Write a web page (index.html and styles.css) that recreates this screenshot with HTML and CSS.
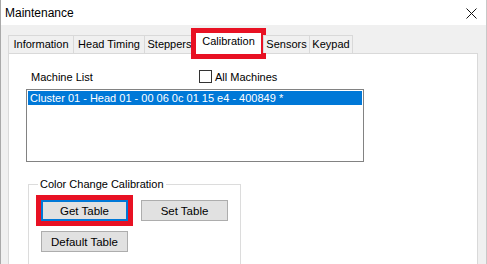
FILE: index.html
```html
<!DOCTYPE html>
<html lang="en">
<head>
    <meta charset="UTF-8">
    <title>Maintenance</title>
    <link rel="stylesheet" href="styles.css">
</head>
<body>

    <div class="window">
        <div class="titlebar">
            <span class="title">Maintenance</span>
            <svg class="close" width="11" height="11" viewBox="0 0 11 11">
                <path d="M0.5 0.5 L10.5 10.5 M10.5 0.5 L0.5 10.5" stroke="#111" stroke-width="1" fill="none"/>
            </svg>
        </div>

        <div class="dialog-body">
            <div class="tabs">
                <div class="tab tab-info">Information</div>
                <div class="tab tab-timing">Head Timing</div>
                <div class="tab tab-steppers">Steppers</div>
                <div class="tab tab-calib active">Calibration</div>
                <div class="tab tab-sensors">Sensors</div>
                <div class="tab tab-keypad">Keypad</div>
            </div>

            <div class="tab-page">
                <div class="list-header">
                    <span class="list-label">Machine List</span>
                    <label class="check">
                        <span class="check-box"></span>
                        All Machines
                    </label>
                </div>

                <div class="listbox">
                    <div class="list-item selected">Cluster 01 - Head 01 - 00 06 0c 01 15 e4 - 400849 *</div>
                </div>

                <fieldset class="group">
                    <legend>Color Change Calibration</legend>
                    <div class="btn-row">
                        <button class="btn focused">Get Table</button>
                        <button class="btn">Set Table</button>
                    </div>
                    <div class="btn-row">
                        <button class="btn">Default Table</button>
                    </div>
                </fieldset>
            </div>
        </div>
    </div>

</body>
</html>
```

FILE: styles.css
```css
body {
    margin: 0;
    font-family: "Liberation Sans", Arial, sans-serif;
    font-size: 11px;
    color: #000;
    background: #f0f0f0;
}
.window {
    width: 487px;
    height: 264px;
    box-sizing: border-box;
    border-left: 1px solid #a9a9a9;
    border-right: 1px solid #c8c8c8;
    background: #f0f0f0;
    overflow: hidden;
}
.titlebar {
    height: 25px;
    background: #fff;
    display: flex;
    align-items: center;
    justify-content: space-between;
    padding: 0 9px 0 4px;
}
.title {
    font-size: 12px;
    margin-top: 1px;
}
.close {
    margin-top: 1px;
}
.dialog-body {
    padding: 8px 8px 0 7px;
}
.tabs {
    display: flex;
    align-items: flex-end;
    height: 20px;
    position: relative;
    z-index: 1;
}
.tab {
    height: 18px;
    box-sizing: border-box;
    border: 1px solid #d9d9d9;
    border-bottom: none;
    border-right: none;
    background: #f0f0f0;
    line-height: 17px;
    text-align: center;
}
.tab-info { width: 65px; }
.tab-timing { width: 71px; }
.tab-steppers { width: 51px; border-right: 1px solid #d9d9d9; }
.tab-sensors { width: 46px; }
.tab-keypad { width: 44px; border-right: 1px solid #d9d9d9; }
.tab.active {
    width: 65px;
    height: 21px;
    margin: 0 2px 0 1px;
    background: #fff;
    border: none;
    line-height: 17px;
    outline: 5px solid #e81123;
    margin-bottom: -1px;
}
.tab-page {
    height: 220px;
    width: 470px;
    box-sizing: border-box;
    background: #fff;
    border: 1px solid #d9d9d9;
    padding: 0 0 0 17px;
}
.list-header {
    display: flex;
    align-items: center;
    height: 17px;
    margin-top: 14px;
}
.list-label {
    width: 168px;
    padding-left: 5px;
}
.check {
    display: flex;
    align-items: center;
    gap: 3px;
}
.check-box {
    width: 13px;
    height: 13px;
    box-sizing: border-box;
    border: 1px solid #333;
    background: #fff;
}
.listbox {
    width: 338px;
    height: 73px;
    box-sizing: border-box;
    margin-top: 4px;
    border: 1px solid #828282;
    padding: 1px;
}
.list-item {
    height: 14px;
    line-height: 14px;
    padding-left: 2px;
    white-space: nowrap;
}
.list-item.selected {
    background: #0078d7;
    color: #fff;
}
.group {
    width: 213px;
    box-sizing: border-box;
    margin: 16px 0 0 2px;
    padding: 9px 12px 20px;
    border: 1px solid #dcdcdc;
}
.group legend {
    padding: 0 2px;
    margin-left: -3px;
    line-height: 13px;
}
.btn-row {
    display: flex;
    gap: 13px;
    margin-bottom: 10px;
}
.btn {
    width: 87px;
    height: 21px;
    box-sizing: border-box;
    font-family: inherit;
    font-size: 11.5px;
    background: #e1e1e1;
    border: 1px solid #adadad;
    padding: 0;
    color: #000;
}
.btn.focused {
    border: 2px solid #0078d7;
    outline: 5px solid #e81123;
}
```
